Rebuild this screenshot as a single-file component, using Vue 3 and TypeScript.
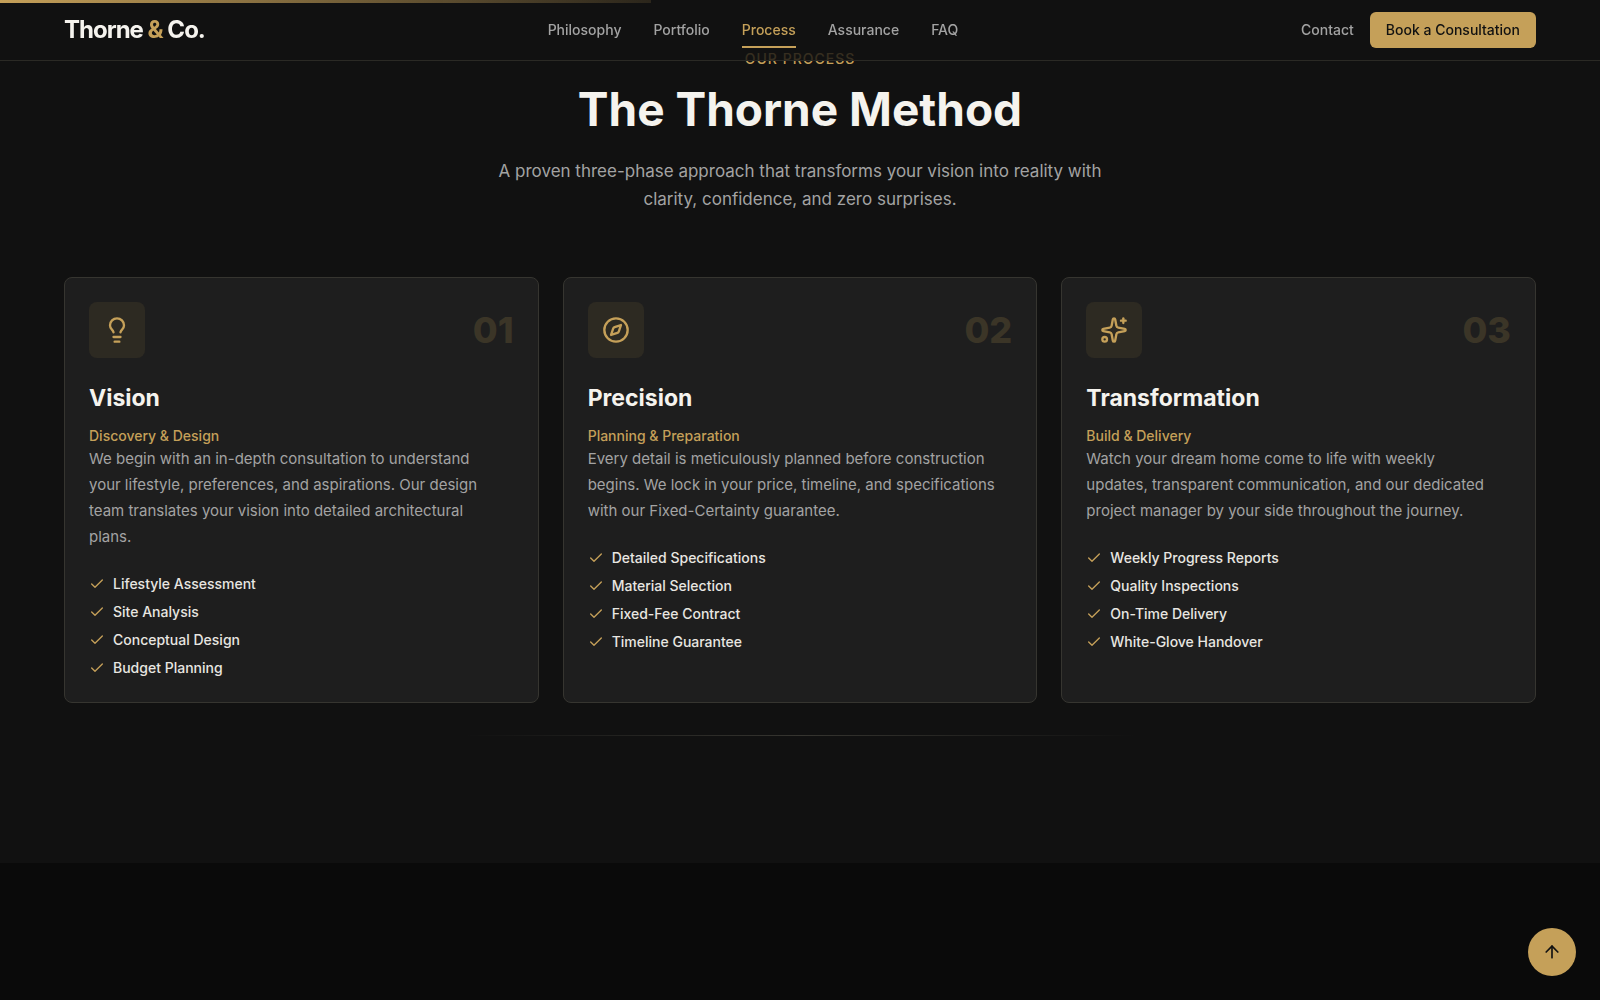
<script setup lang="ts">
interface NavItem {
  label: string
  href: string
}

interface Phase {
  number: string
  icon: 'bulb' | 'compass' | 'sparkles'
  title: string
  subtitle: string
  description: string
  deliverables: string[]
}

const activeSection = 'Process'
const scrollProgress = 40.7

const navItems: NavItem[] = [
  { label: 'Philosophy', href: '#philosophy' },
  { label: 'Portfolio', href: '#portfolio' },
  { label: 'Process', href: '#process' },
  { label: 'Assurance', href: '#assurance' },
  { label: 'FAQ', href: '#faq' },
]

const phases: Phase[] = [
  {
    number: '01',
    icon: 'bulb',
    title: 'Vision',
    subtitle: 'Discovery & Design',
    description:
      'We begin with an in-depth consultation to understand your lifestyle, preferences, and aspirations. Our design team translates your vision into detailed architectural plans.',
    deliverables: ['Lifestyle Assessment', 'Site Analysis', 'Conceptual Design', 'Budget Planning'],
  },
  {
    number: '02',
    icon: 'compass',
    title: 'Precision',
    subtitle: 'Planning & Preparation',
    description:
      'Every detail is meticulously planned before construction begins. We lock in your price, timeline, and specifications with our Fixed-Certainty guarantee.',
    deliverables: ['Detailed Specifications', 'Material Selection', 'Fixed-Fee Contract', 'Timeline Guarantee'],
  },
  {
    number: '03',
    icon: 'sparkles',
    title: 'Transformation',
    subtitle: 'Build & Delivery',
    description:
      'Watch your dream home come to life with weekly updates, transparent communication, and our dedicated project manager by your side throughout the journey.',
    deliverables: ['Weekly Progress Reports', 'Quality Inspections', 'On-Time Delivery', 'White-Glove Handover'],
  },
]

function scrollToTop(): void {
  window.scrollTo({ top: 0, behavior: 'smooth' })
}
</script>

<template>
  <div class="page">
    <header class="site-header">
      <a class="logo" href="#top">Thorne <span class="accent">&amp;</span> Co.</a>
      <nav class="nav" aria-label="Main">
        <a
          v-for="item in navItems"
          :key="item.label"
          :href="item.href"
          class="nav-link"
          :class="{ active: item.label === activeSection }"
          >{{ item.label }}</a
        >
      </nav>
      <div class="actions">
        <a class="nav-link" href="#contact">Contact</a>
        <button class="cta" type="button">Book a Consultation</button>
      </div>
    </header>
    <div class="progress" :style="{ width: scrollProgress + '%' }"></div>

    <section id="process" class="process">
      <div class="intro">
        <span class="eyebrow">Our Process</span>
        <h2 class="heading">The Thorne Method</h2>
        <p class="lead">
          A proven three-phase approach that transforms your vision into reality with clarity, confidence, and
          zero surprises.
        </p>
      </div>

      <div class="cards">
        <article v-for="phase in phases" :key="phase.number" class="card">
          <div class="card-top">
            <span class="icon-box">
              <svg class="icon" viewBox="0 0 24 24" aria-hidden="true">
                <template v-if="phase.icon === 'bulb'">
                  <path
                    d="M15 14c.2-1 .7-1.7 1.5-2.5 1-.9 1.5-2.2 1.5-3.5A6 6 0 0 0 6 8c0 1 .2 2.2 1.5 3.5.7.7 1.3 1.5 1.5 2.5"
                  />
                  <path d="M9 18h6" />
                  <path d="M10 22h4" />
                </template>
                <template v-else-if="phase.icon === 'compass'">
                  <circle cx="12" cy="12" r="10" />
                  <path
                    d="m16.24 7.76-1.804 5.411a2 2 0 0 1-1.265 1.265L7.76 16.24l1.804-5.411a2 2 0 0 1 1.265-1.265z"
                  />
                </template>
                <template v-else>
                  <path
                    d="M11.017 2.814a1 1 0 0 1 1.966 0l1.051 5.558a2 2 0 0 0 1.594 1.594l5.558 1.051a1 1 0 0 1 0 1.966l-5.558 1.051a2 2 0 0 0-1.594 1.594l-1.051 5.558a1 1 0 0 1-1.966 0l-1.051-5.558a2 2 0 0 0-1.594-1.594l-5.558-1.051a1 1 0 0 1 0-1.966l5.558-1.051a2 2 0 0 0 1.594-1.594z"
                  />
                  <path d="M20 2v4" />
                  <path d="M22 4h-4" />
                  <circle cx="4" cy="20" r="2" />
                </template>
              </svg>
            </span>
            <span class="number">{{ phase.number }}</span>
          </div>
          <h3 class="title">{{ phase.title }}</h3>
          <p class="subtitle">{{ phase.subtitle }}</p>
          <p class="description">{{ phase.description }}</p>
          <ul class="deliverables">
            <li v-for="item in phase.deliverables" :key="item" class="deliverable">
              <svg class="check" viewBox="0 0 24 24" aria-hidden="true">
                <path d="M20 6 9 17l-5-5" />
              </svg>
              <span>{{ item }}</span>
            </li>
          </ul>
        </article>
      </div>
      <div class="divider"></div>
    </section>

    <button class="to-top" type="button" aria-label="Scroll to top" @click="scrollToTop">
      <svg class="arrow" viewBox="0 0 24 24" aria-hidden="true">
        <path d="m5 12 7-7 7 7" />
        <path d="M12 19V5" />
      </svg>
    </button>
  </div>
</template>

<style>
body {
  margin: 0;
  background: #0a0a0a;
}
</style>

<style scoped>
.page {
  --gold: #c5a059;
  --cream: #f5f3ee;
  --muted: #a3a3a3;
  min-height: 100vh;
  background: #0a0a0a;
  color: var(--cream);
  font-family: Inter, "Liberation Sans", sans-serif;
  font-size: 14px;
  line-height: 20px;
}

h2,
h3,
p,
ul {
  margin: 0;
  padding: 0;
}

.site-header {
  position: fixed;
  inset: 0 0 auto;
  z-index: 10;
  display: flex;
  align-items: center;
  justify-content: space-between;
  padding: 12px 64px;
  border-bottom: 1px solid #2b2a25;
  background: rgba(17, 17, 17, 0.8);
}

.progress {
  position: fixed;
  top: 0;
  left: 0;
  z-index: 11;
  height: 3px;
  background: linear-gradient(90deg, #c5a059, rgba(197, 160, 89, 0.15));
}

.logo {
  color: var(--cream);
  font-size: 24px;
  font-weight: 700;
  line-height: 32px;
  letter-spacing: -1px;
  text-decoration: none;
}

.accent {
  color: var(--gold);
}

.nav {
  display: flex;
  gap: 32px;
}

.nav-link {
  position: relative;
  padding: 8px 0;
  color: var(--muted);
  font-weight: 500;
  text-decoration: none;
}

.nav-link.active {
  color: var(--gold);
}

.nav-link.active::after {
  content: "";
  position: absolute;
  inset: auto 0 0;
  height: 2px;
  background: var(--gold);
}

.actions {
  display: flex;
  align-items: center;
  gap: 16px;
}

.cta {
  padding: 8px 16px;
  border: 0;
  border-radius: 6px;
  background: var(--gold);
  color: #111111;
  font: inherit;
  font-weight: 500;
  cursor: pointer;
}

.process {
  display: flex;
  flex-direction: column;
  padding: 49px 64px 127px;
  background: #111111;
}

.intro {
  display: flex;
  flex-direction: column;
  align-items: center;
  margin-bottom: 64px;
  text-align: center;
}

.eyebrow {
  color: var(--gold);
  font-weight: 500;
  letter-spacing: 1px;
  text-transform: uppercase;
}

.heading {
  margin-top: 16px;
  font-size: 46px;
  font-weight: 700;
  line-height: 48px;
}

.lead {
  max-width: 640px;
  margin-top: 24px;
  color: var(--muted);
  font-size: 17px;
  line-height: 28px;
}

.cards {
  display: grid;
  grid-template-columns: repeat(3, 1fr);
  gap: 24px;
}

.card {
  padding: 24px;
  border: 1px solid #363530;
  border-radius: 8px;
  background: #1e1e1e;
}

.card-top {
  display: flex;
  align-items: center;
  justify-content: space-between;
  margin-bottom: 24px;
}

.icon-box {
  display: flex;
  align-items: center;
  justify-content: center;
  width: 56px;
  height: 56px;
  border-radius: 8px;
  background: #2d2a22;
}

.icon,
.check,
.arrow {
  fill: none;
  stroke: var(--gold);
  stroke-width: 2;
  stroke-linecap: round;
  stroke-linejoin: round;
}

.icon {
  width: 28px;
  height: 28px;
}

.number {
  color: #3b3527;
  font-size: 36px;
  font-weight: 800;
  line-height: 40px;
}

.title {
  font-size: 23px;
  font-weight: 700;
  line-height: 32px;
}

.subtitle {
  margin-top: 12px;
  color: var(--gold);
  font-weight: 500;
}

.description {
  padding-right: 12px;
  color: var(--muted);
  font-size: 15px;
  line-height: 26px;
}

.deliverables {
  display: flex;
  flex-direction: column;
  gap: 8px;
  margin-top: 24px;
  list-style: none;
}

.deliverable {
  display: flex;
  align-items: center;
  gap: 8px;
  color: #e8e6e1;
  font-weight: 500;
}

.check {
  width: 16px;
  height: 16px;
}

.divider {
  align-self: center;
  width: 100%;
  max-width: 672px;
  height: 1px;
  margin-top: 32px;
  background: linear-gradient(90deg, transparent, #363530, transparent);
}

.to-top {
  position: fixed;
  right: 24px;
  bottom: 24px;
  display: flex;
  align-items: center;
  justify-content: center;
  width: 48px;
  height: 48px;
  padding: 0;
  border: 0;
  border-radius: 50%;
  background: var(--gold);
  cursor: pointer;
}

.arrow {
  width: 20px;
  height: 20px;
  stroke: #111111;
}
</style>
